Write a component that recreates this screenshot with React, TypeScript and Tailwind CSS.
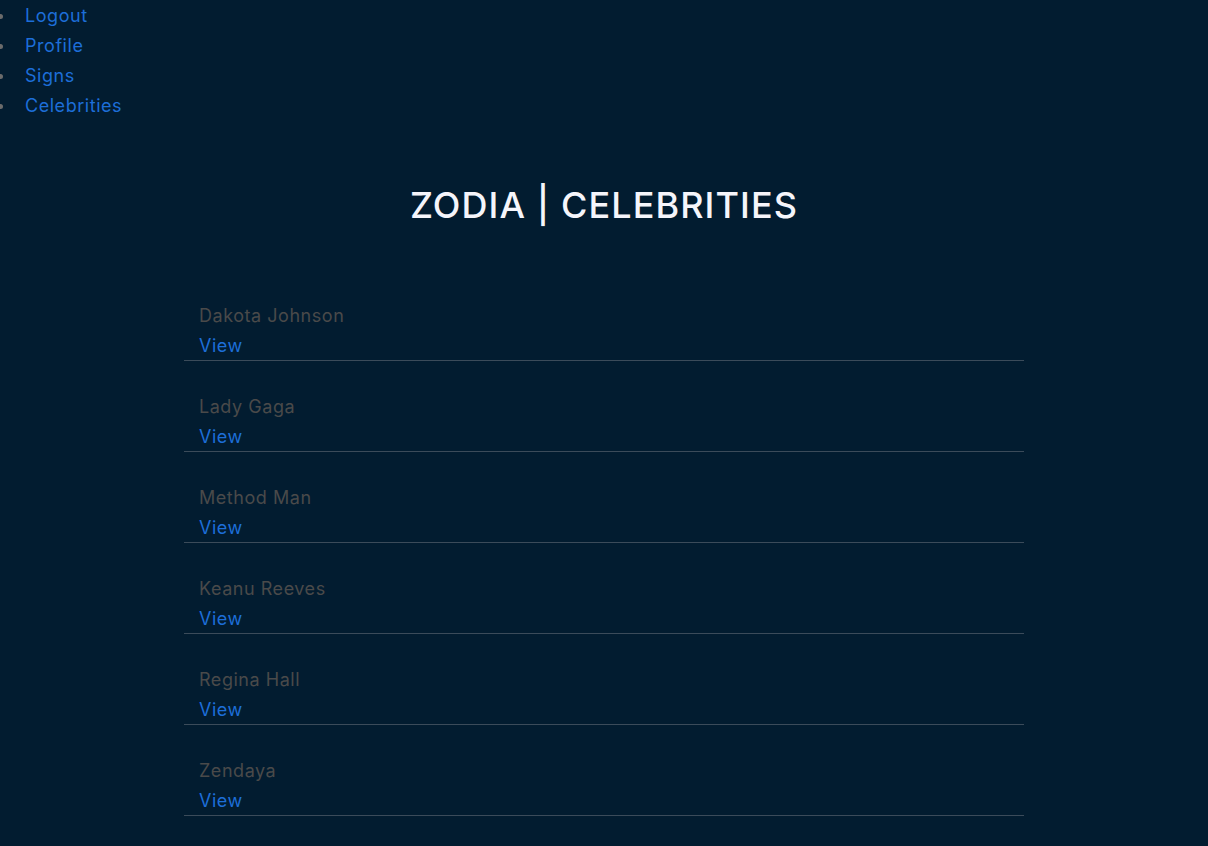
const celebrities = ["Dakota Johnson", "Lady Gaga", "Method Man", "Keanu Reeves", "Regina Hall", "Zendaya"];

export default function App() {
  return (
    <div className="min-h-[846px] bg-[#021c30] pt-px font-['Inter',sans-serif] text-[18px] tracking-[0.03em]">
      <ul>
        {["Logout", "Profile", "Signs", "Celebrities"].map((item) => (
          <li key={item} className="flex items-center leading-[30px]">
            <span className="-ml-[2px] mr-[22px] h-[5px] w-[5px] rounded-full bg-[#6b6b6b]" />
            <a href="#" className="text-[#1d6ed8]">{item}</a>
          </li>
        ))}
      </ul>

      <h1 className="mt-[62px] text-center text-[36px] font-medium leading-[44px] tracking-[0.03em] text-[#f5f5fb]">
        ZODIA | CELEBRITIES
      </h1>

      <div className="mx-auto mt-[43px] w-[840px]">
        {celebrities.map((name) => (
          <div key={name} className="border-b border-[#3b4b5a] px-[15px] pt-[31px]">
            <div className="leading-[30px] text-[#4a4a4a]">{name}</div>
            <a href="#" className="block leading-[29px] text-[#1d6ed8]">View</a>
          </div>
        ))}
      </div>
    </div>
  );
}
